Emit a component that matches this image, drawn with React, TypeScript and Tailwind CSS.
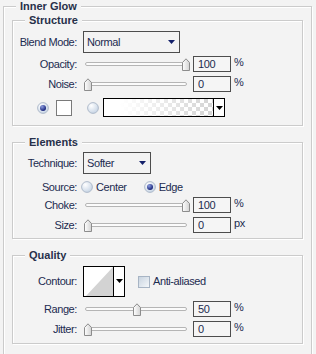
import type { ReactNode } from "react";

const TEXT = "text-[11px] leading-[13px] tracking-[-0.4px] text-[#1c2b50]";
const LABEL = `w-[64px] shrink-0 text-right ${TEXT}`;

const Group = ({
  title,
  className = "",
  children,
}: {
  title: string;
  className?: string;
  children: ReactNode;
}) => (
  <fieldset
    className={`min-w-0 border border-[#cbcbcb] shadow-[inset_1px_1px_0_#fff,1px_1px_0_#fff] ${className}`}
  >
    <legend className="ml-[12px] bg-[#f3f3f3] px-[4px] text-[11px] font-bold leading-[13px] text-[#27304a]">
      {title}
    </legend>
    {children}
  </fieldset>
);

const Arrow = ({ color = "#14206a" }: { color?: string }) => (
  <svg width="7" height="4" viewBox="0 0 7 4" aria-hidden="true">
    <polygon points="0,0 7,0 3.5,4" fill={color} />
  </svg>
);

const Radio = ({ checked = false }: { checked?: boolean }) => (
  <svg width="12" height="12" viewBox="0 0 12 12" className="shrink-0" aria-hidden="true">
    <defs>
      <radialGradient id={checked ? "rOn" : "rOff"} cx="35%" cy="30%" r="75%">
        <stop offset="0" stopColor="#ffffff" />
        <stop offset="1" stopColor="#c5d3e4" />
      </radialGradient>
      <radialGradient id="dot" cx="35%" cy="30%" r="70%">
        <stop offset="0" stopColor="#8d9ee0" />
        <stop offset="1" stopColor="#17237a" />
      </radialGradient>
    </defs>
    <circle cx="6" cy="6" r="5.4" fill={`url(#${checked ? "rOn" : "rOff"})`} stroke="#a9b6c6" strokeWidth="0.9" />
    {checked && <circle cx="6" cy="6" r="3" fill="url(#dot)" />}
  </svg>
);

const Thumb = () => (
  <svg width="8" height="13" viewBox="0 0 8 13" aria-hidden="true">
    <defs>
      <linearGradient id="thumb" x1="0" y1="0" x2="1" y2="0">
        <stop offset="0" stopColor="#ffffff" />
        <stop offset="1" stopColor="#d2d2d2" />
      </linearGradient>
    </defs>
    <path d="M0.5 12.5 V4.5 L4 0.8 L7.5 4.5 V12.5 Z" fill="url(#thumb)" stroke="#8c8c8c" strokeWidth="1" strokeLinejoin="round" />
  </svg>
);

const Slider = ({ value }: { value: number }) => (
  <div className="relative flex h-[16px] w-[106px] shrink-0 items-center">
    <div className="ml-[2px] h-[4px] w-[102px] rounded-full border border-[#b5b5b5] bg-[#fbfbfb]" />
    <div className="absolute top-[2px]" style={{ left: 1 + (value / 100) * 98 }}>
      <Thumb />
    </div>
  </div>
);

const NumBox = ({ value, unit = "%" }: { value: string; unit?: string }) => (
  <div className="ml-[4px] flex items-center">
    <div className={`h-[16px] w-[38px] border border-[#4d4d4d] bg-[#f5f5f5] pl-[4px] ${TEXT} leading-[14px]`}>
      {value}
    </div>
    <span className={`ml-[3px] -mt-[3px] ${TEXT}`}>{unit}</span>
  </div>
);

const SliderRow = ({
  label,
  pos,
  value,
  unit,
  className = "",
}: {
  label: string;
  pos: number;
  value: string;
  unit?: string;
  className?: string;
}) => (
  <div className={`flex h-[16px] items-center ${className}`}>
    <span className={LABEL}>{label}</span>
    <div className="ml-[6px] flex items-center">
      <Slider value={pos} />
      <NumBox value={value} unit={unit} />
    </div>
  </div>
);

const Select = ({ value, width }: { value: string; width: string }) => (
  <div className={`ml-[6px] flex h-[22px] items-center justify-between border border-[#4d4d4d] pl-[3px] pr-[4px] ${width}`}>
    <span className={TEXT}>{value}</span>
    <Arrow />
  </div>
);

export default function App() {
  return (
    <div className="h-[354px] w-[316px] overflow-hidden bg-[#f3f3f3] font-['Liberation_Sans',Arial,sans-serif]">
      <Group title="Inner Glow" className="ml-[3px] w-[309px] pb-[40px]">
        <div className="px-[8px]">
          <Group title="Structure" className="mt-[1px] pb-[8px]">
            <div className="mt-[4px] flex items-center">
              <span className={LABEL}>Blend Mode:</span>
              <Select value="Normal" width="w-[97px]" />
            </div>
            <SliderRow label="Opacity:" pos={100} value="100" className="mt-[3px]" />
            <SliderRow label="Noise:" pos={0} value="0" className="mt-[4px]" />
            <div className="mt-[6px] flex h-[19px] items-center pl-[24px]">
              <Radio checked />
              <div className="ml-[7px] h-[16px] w-[16px] border border-[#7a7a7a] bg-white" />
              <div className="ml-[15px]">
                <Radio />
              </div>
              <div className="ml-[4px] flex h-[19px] w-[122px] border border-black">
                <div className="flex-1 bg-[linear-gradient(to_right,#fff_15%,rgba(255,255,255,0)_95%),repeating-conic-gradient(#d6d6d6_0_25%,#fff_0_50%)] [background-size:100%_100%,8px_8px]" />
                <div className="flex w-[11px] items-center justify-center border-l border-black bg-white">
                  <Arrow color="#000" />
                </div>
              </div>
            </div>
          </Group>

          <Group title="Elements" className="mt-[10px] pb-[5px]">
            <div className="mt-[3px] flex items-center">
              <span className={LABEL}>Technique:</span>
              <Select value="Softer" width="w-[68px]" />
            </div>
            <div className="mt-[5px] flex h-[16px] items-center">
              <span className={LABEL}>Source:</span>
              <div className="ml-[4px] flex items-center">
                <Radio />
                <span className={`ml-[3px] ${TEXT}`}>Center</span>
              </div>
              <div className="ml-[17px] flex items-center">
                <Radio checked />
                <span className={`ml-[3px] ${TEXT}`}>Edge</span>
              </div>
            </div>
            <SliderRow label="Choke:" pos={100} value="100" className="mt-[2px]" />
            <SliderRow label="Size:" pos={0} value="0" unit="px" className="mt-[4px]" />
          </Group>

          <Group title="Quality" className="mt-[10px] pb-[6px]">
            <div className="mt-[4px] flex items-center">
              <span className={LABEL}>Contour:</span>
              <div className="ml-[6px] flex h-[31px] w-[42px] border border-black bg-white">
                <svg width="29" height="29" viewBox="0 0 29 29" className="shrink-0" aria-hidden="true">
                  <polygon points="2,29 29,0 29,29" fill="#d3d3d3" />
                </svg>
                <div className="flex flex-1 justify-center border-l border-black pt-[12px]">
                  <Arrow color="#000" />
                </div>
              </div>
              <div className="ml-[13px] h-[12px] w-[12px] border border-[#a7b4c4] bg-[linear-gradient(135deg,#c9d4e0,#f4f7fa)]" />
              <span className={`ml-[3px] ${TEXT}`}>Anti-aliased</span>
            </div>
            <SliderRow label="Range:" pos={50} value="50" className="mt-[4px]" />
            <SliderRow label="Jitter:" pos={0} value="0" className="mt-[4px]" />
          </Group>
        </div>
      </Group>
    </div>
  );
}
